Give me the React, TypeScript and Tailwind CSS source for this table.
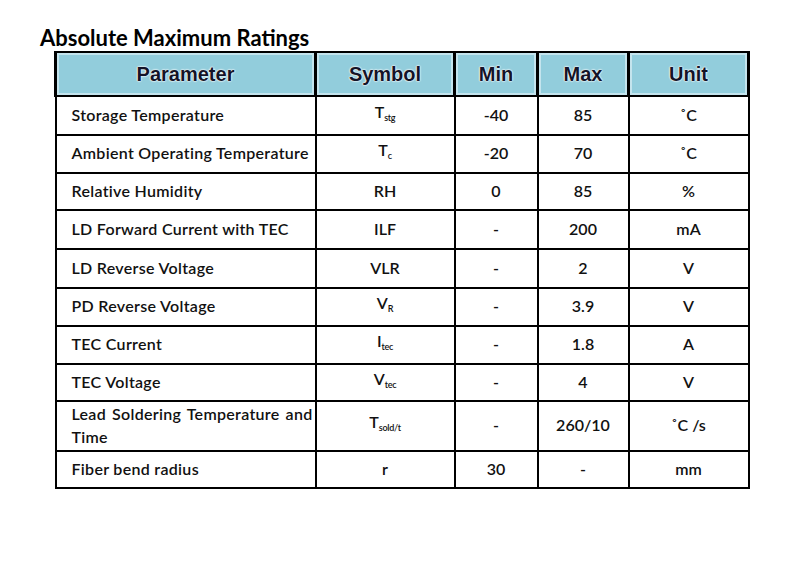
import React from 'react';

type Row = {
    param: React.ReactNode;
    symbol: React.ReactNode;
    min: string;
    max: string;
    unit: string;
    h: string;
};

const Sub = ({ base, sub }: { base: string; sub: string }) => (
    <span>
        {base}
        <span className="text-[9px] align-[-3px] tracking-[-0.3px]">{sub}</span>
    </span>
);

const rows: Row[] = [
    { param: 'Storage Temperature', symbol: <Sub base="T" sub="stg" />, min: '-40', max: '85', unit: '˚C', h: 'h-[39px]' },
    { param: 'Ambient Operating Temperature', symbol: <Sub base="T" sub="c" />, min: '-20', max: '70', unit: '˚C', h: 'h-[38px]' },
    { param: 'Relative Humidity', symbol: 'RH', min: '0', max: '85', unit: '%', h: 'h-[37px]' },
    { param: 'LD Forward Current with TEC', symbol: 'ILF', min: '-', max: '200', unit: 'mA', h: 'h-[39px]' },
    { param: 'LD Reverse Voltage', symbol: 'VLR', min: '-', max: '2', unit: 'V', h: 'h-[39px]' },
    { param: 'PD Reverse Voltage', symbol: <Sub base="V" sub="R" />, min: '-', max: '3.9', unit: 'V', h: 'h-[38px]' },
    { param: 'TEC Current', symbol: <Sub base="I" sub="tec" />, min: '-', max: '1.8', unit: 'A', h: 'h-[38px]' },
    { param: 'TEC Voltage', symbol: <Sub base="V" sub="tec" />, min: '-', max: '4', unit: 'V', h: 'h-[37px]' },
    {
        param: (
            <span className="block leading-[23px]">
                <span className="block whitespace-nowrap [text-align-last:justify]">Lead Soldering Temperature and</span>
                <span className="block">Time</span>
            </span>
        ),
        symbol: <Sub base="T" sub="sold/t" />,
        min: '-',
        max: '260/10',
        unit: '˚C /s',
        h: 'h-[48px]',
    },
    { param: 'Fiber bend radius', symbol: 'r', min: '30', max: '-', unit: 'mm', h: 'h-[37px]' },
];

const headers = ['Parameter', 'Symbol', 'Min', 'Max', 'Unit'];
const widths = ['w-[260px]', 'w-[139px]', 'w-[83px]', 'w-[91px]', 'w-[120px]'];

const App: React.FC = () => {
    return (
        <div className="w-[800px] h-[569px] bg-white pt-[25px] pl-[40px] font-['Lato','Liberation_Sans',sans-serif] text-[#111]">
            <h1 className="text-[22px] font-bold leading-[26px] text-black">Absolute Maximum Ratings</h1>

            <table className="ml-[14px] mt-0 border-collapse border-2 border-black table-fixed leading-5">
                <thead>
                    <tr className="h-[44px]">
                        {headers.map((h, i) => (
                            <th
                                key={h}
                                className={`${widths[i]} border-x-[3px] border-b-2 border-black bg-[#92cddc] p-0 shadow-[inset_0_0_0_2px_#c4e4ed] font-['Liberation_Sans',Arial,sans-serif] text-[20px] font-bold text-[#141428] [text-shadow:0_0_2px_#fff,0_0_2px_#fff,0_0_1px_#fff]`}
                            >
                                {h}
                            </th>
                        ))}
                    </tr>
                </thead>
                <tbody>
                    {rows.map((r, i) => (
                        <tr key={i} className={r.h}>
                            <td className="border-2 border-black pl-[15px] pr-[2px] pb-[2px] text-[16px] font-semibold tracking-[0.3px]">{r.param}</td>
                            <td className="border-2 border-black pb-[2px] text-center text-[16px] font-semibold">{r.symbol}</td>
                            <td className="border-2 border-black pb-[2px] text-center text-[16px] font-semibold">{r.min}</td>
                            <td className="border-2 border-black pb-[2px] text-center text-[16px] font-semibold">{r.max}</td>
                            <td className="border-2 border-black pb-[2px] text-center text-[16px] font-semibold">{r.unit}</td>
                        </tr>
                    ))}
                </tbody>
            </table>
        </div>
    );
};

export default App;
